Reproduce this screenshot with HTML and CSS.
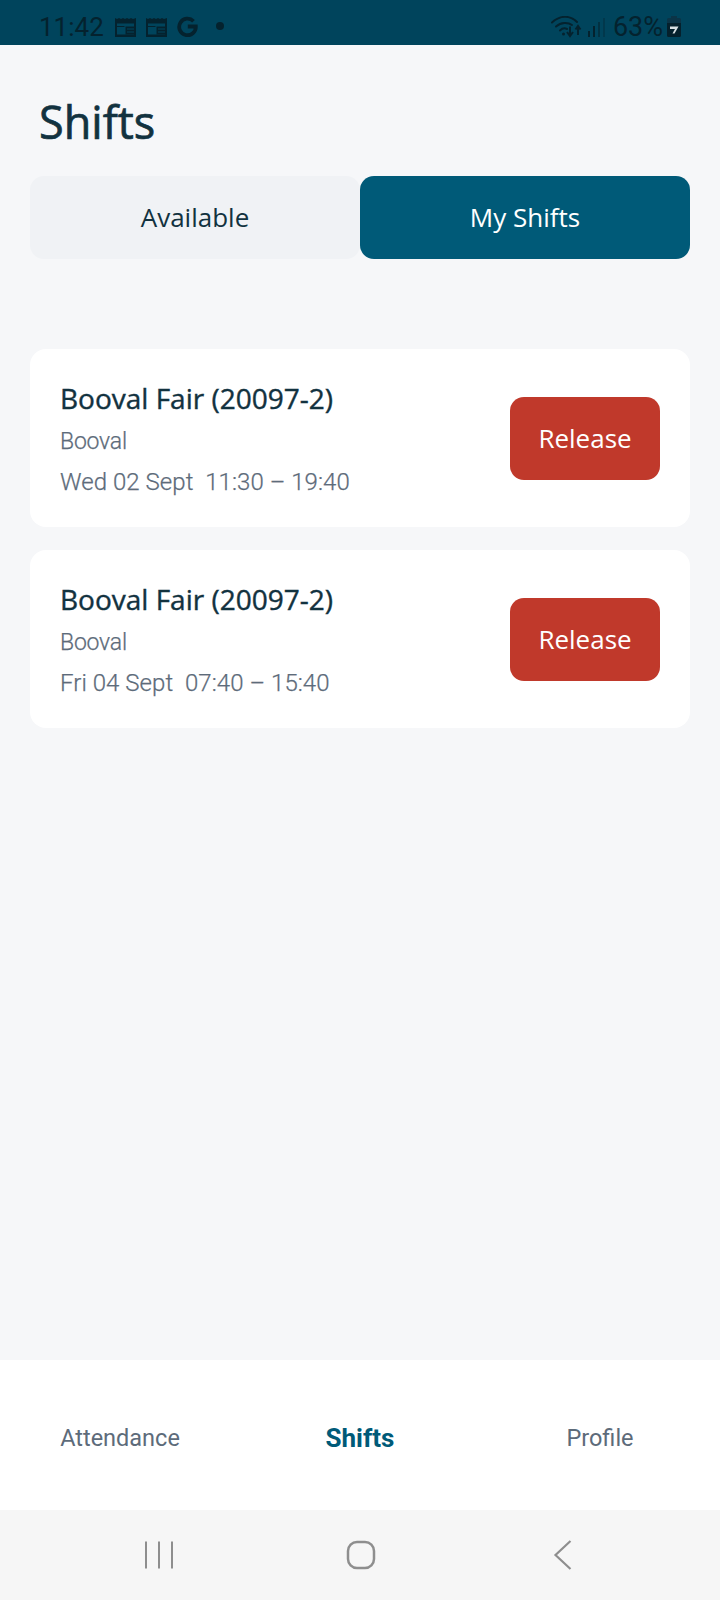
FILE: index.html
```html
<!DOCTYPE html>
<html lang="en">
<head>
  <meta charset="UTF-8">
  <title>Shifts</title>
  <link rel="stylesheet" href="styles.css">
</head>
<body>

  <div class="status-bar">
    <div class="status-side">
      <span class="status-text status-time">11:42</span>
      <svg class="status-icon" width="21" height="20" viewBox="0 0 21 20"><path d="M0 1l2 1 2-1 2 1 2-1 2 1 2-1 2 1 2-1 2 1 3-1v19H0z" fill="#04222e"/><path d="M2 6.500h17V17.500H2z" fill="#00445c"/><path d="M2 9h7.500v1H2zM10.500 9.500H19V17.500H10.500z" fill="#04222e"/><path d="M12 11.500h7v1h-7zM12 14.500h7v1h-7z" fill="#00445c"/></svg>
      <svg class="status-icon" width="21" height="20" viewBox="0 0 21 20"><path d="M0 1l2 1 2-1 2 1 2-1 2 1 2-1 2 1 2-1 2 1 3-1v19H0z" fill="#04222e"/><path d="M2 6.500h17V17.500H2z" fill="#00445c"/><path d="M2 9h7.500v1H2zM10.500 9.500H19V17.500H10.500z" fill="#04222e"/><path d="M12 11.500h7v1h-7zM12 14.500h7v1h-7z" fill="#00445c"/></svg>
      <svg class="status-icon" width="21" height="21" viewBox="0 0 21 21"><path d="M16.500 5.200A8.300 8.300 0 1 0 18.800 10.500H10.800" fill="none" stroke="#04222e" stroke-width="3.800"/></svg>
      <span class="status-dot"></span>
    </div>
    <div class="status-side">
      <svg class="status-icon status-wifi" width="31" height="22" viewBox="0 0 31 22"><g fill="none" stroke="#04222e" stroke-width="2" stroke-linecap="round"><path d="M1 6.500C9 -1 19 -1 26 6"/><path d="M5 10.500C10 6 17 6 21 9"/><path d="M9 14.500c2-2 5-2.500 7-1.500"/></g><circle cx="12.500" cy="18" r="1.500" fill="#04222e"/><path d="M19 10.500v8M16 16l3 4 3-4" fill="none" stroke="#04222e" stroke-width="2"/><path d="M27 11v8M24.500 13.500L27 10l2.500 3.500" fill="none" stroke="#04222e" stroke-width="2"/></svg>
      <div class="signal">
        <span class="signal-bar signal-1"></span>
        <span class="signal-bar signal-2"></span>
        <span class="signal-bar signal-3"></span>
        <span class="signal-bar signal-4"></span>
      </div>
      <span class="status-text status-battery">63%</span>
      <svg class="status-icon" width="14" height="21" viewBox="0 0 14 21"><path d="M4 0h6v2h2.500q1.500 0 1.500 1.500V7H0V3.500Q0 2 1.500 2H4z" fill="#0b3447"/><path d="M0 7h14v12.500q0 1.500-1.500 1.500h-11Q0 21 0 19.500z" fill="#05202c"/><path d="M3 10.500h8.500l-4 7h-2l2.500-4.500H3z" fill="#d8dfe2"/></svg>
    </div>
  </div>

  <div class="content">
    <h1 class="page-title">Shifts</h1>

    <div class="tabs">
      <div class="tab">Available</div>
      <div class="tab tab-active">My Shifts</div>
    </div>

    <div class="shift-list">
      <div class="shift-card">
        <div class="shift-info">
          <div class="shift-name">Booval Fair (20097-2)</div>
          <div class="shift-place">Booval</div>
          <div class="shift-time">Wed 02 Sept&nbsp; 11:30 – 19:40</div>
        </div>
        <button class="release-btn">Release</button>
      </div>
      <div class="shift-card">
        <div class="shift-info">
          <div class="shift-name">Booval Fair (20097-2)</div>
          <div class="shift-place">Booval</div>
          <div class="shift-time">Fri 04 Sept&nbsp; 07:40 – 15:40</div>
        </div>
        <button class="release-btn">Release</button>
      </div>
    </div>
  </div>

  <div class="bottom-nav">
    <div class="nav-item">Attendance</div>
    <div class="nav-item nav-active">Shifts</div>
    <div class="nav-item">Profile</div>
  </div>

  <div class="system-bar">
    <svg width="30" height="30" viewBox="0 0 30 30"><path d="M2 1.500v27M15 1.500v27M28 1.500v27" fill="none" stroke="#8e8e8e" stroke-width="2"/></svg>
    <svg width="30" height="30" viewBox="0 0 30 30"><rect x="2" y="2" width="26" height="26" rx="9" fill="none" stroke="#8e8e8e" stroke-width="2.500"/></svg>
    <svg width="30" height="30" viewBox="0 0 30 30"><path d="M22.500 1L7.500 15 22.500 29" fill="none" stroke="#8e8e8e" stroke-width="2.200"/></svg>
  </div>

</body>
</html>
```

FILE: styles.css
```css
* {
  box-sizing: border-box;
}

body {
  margin: 0;
  width: 720px;
  height: 1600px;
  display: flex;
  flex-direction: column;
  background: #f6f7f9;
  font-family: 'Open Sans', sans-serif;
  overflow: hidden;
}

.status-bar {
  height: 45px;
  flex: none;
  display: flex;
  justify-content: space-between;
  align-items: center;
  padding: 8px 39px 0 39px;
  background: #00445c;
}

.status-side {
  display: flex;
  align-items: center;
}

.status-text {
  font-family: Roboto, sans-serif;
  font-size: 26px;
  color: #04222e;
}

.status-time {
  margin-right: 11px;
}

.status-icon {
  margin-right: 10px;
  flex: none;
}

.status-icon:last-child {
  margin-right: 0;
}

.status-dot {
  width: 8px;
  height: 8px;
  margin: 0 0 1px 8px;
  border-radius: 50%;
  background: #04222e;
}

.status-battery {
  margin: 0 4px 0 8px;
  font-size: 27px;
}

.signal {
  display: flex;
  align-items: flex-end;
  gap: 3px;
  height: 20px;
  margin-left: -4px;
}

.signal-bar {
  width: 2px;
  background: #04222e;
}

.signal-1 { height: 6px; }
.signal-2 { height: 11px; }
.signal-3 { height: 15px; opacity: 0.55; }
.signal-4 { height: 19px; opacity: 0.35; }

.content {
  flex: 1;
  padding: 0 30px;
}

.page-title {
  margin: 47px 0 0 9px;
  font-size: 45px;
  line-height: 60px;
  font-weight: 500;
  -webkit-text-stroke: 0.7px #12323f;
  color: #12323f;
}

.tabs {
  display: flex;
  margin-top: 24px;
}

.tab {
  flex: 1;
  height: 83px;
  display: flex;
  justify-content: center;
  align-items: center;
  padding-bottom: 2px;
  font-size: 26px;
  color: #12323f;
  background: #f0f2f5;
  border-radius: 14px;
}

.tab-active {
  color: #fff;
  background: #005a78;
}

.shift-list {
  display: flex;
  flex-direction: column;
  gap: 23px;
  margin-top: 90px;
}

.shift-card {
  height: 178px;
  display: flex;
  justify-content: space-between;
  align-items: center;
  padding: 0 30px;
  background: #fff;
  border-radius: 16px;
}

.shift-info {
  padding-top: 4px;
}

.shift-name {
  font-size: 28px;
  line-height: 38px;
  font-weight: 500;
  -webkit-text-stroke: 0.4px #12323f;
  color: #12323f;
}

.shift-place,
.shift-time {
  font-family: Roboto, sans-serif;
  line-height: 40px;
  font-weight: 300;
  -webkit-text-stroke: 0.25px #5d6b7a;
  color: #5d6b7a;
}

.shift-place {
  margin-top: 5px;
  font-size: 23px;
  letter-spacing: -0.2px;
}

.shift-time {
  font-size: 24px;
  letter-spacing: 0.05px;
}

.release-btn {
  width: 150px;
  height: 83px;
  border: none;
  border-radius: 14px;
  font-family: 'Open Sans', sans-serif;
  font-size: 26px;
  color: #fff;
  background: #c0392b;
}

.bottom-nav {
  height: 150px;
  flex: none;
  display: flex;
  align-items: center;
  padding-top: 6px;
  background: #fff;
}

.nav-item {
  flex: 1;
  text-align: center;
  font-family: Roboto, sans-serif;
  font-size: 23.500px;
  color: #5d6b7a;
}

.nav-active {
  font-size: 26px;
  font-weight: 700;
  color: #005a78;
}

.system-bar {
  height: 90px;
  flex: none;
  display: flex;
  justify-content: center;
  align-items: center;
  gap: 172px;
  padding-left: 2px;
  background: #f6f6f6;
}
```
